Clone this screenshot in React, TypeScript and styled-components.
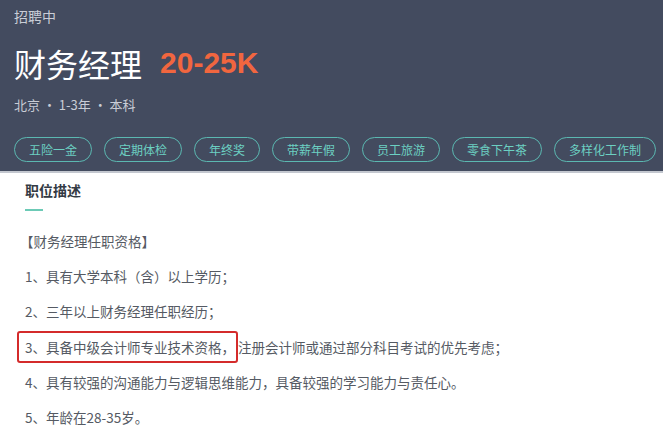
import styled, { createGlobalStyle } from 'styled-components'

const GlobalStyle = createGlobalStyle`
  body {
    margin: 0;
    background: #ffffff;
    font-family: "Noto Sans CJK SC", "Noto Sans", sans-serif;
  }
`

const Page = styled.div`
  width: 663px;
  height: 436px;
  overflow: hidden;
  background: #ffffff;
`

const Header = styled.header`
  background: #434b5f;
  padding: 6px 14px 9px;
  border-bottom: 2px solid #c3c7cf;
`

const Status = styled.div`
  font-size: 14px;
  line-height: 20px;
  color: #c9cdd6;
`

const TitleRow = styled.div`
  display: flex;
  align-items: center;
  margin-top: 17px;
  height: 40px;
`

const Title = styled.h1`
  margin: 0;
  font-size: 32px;
  line-height: 40px;
  font-weight: 400;
  color: #ffffff;
`

const Salary = styled.span`
  margin-left: 18px;
  font-family: "Liberation Sans", Arial, sans-serif;
  font-weight: 700;
  font-size: 30px;
  color: #f1663f;
`

const Meta = styled.div`
  margin-top: 12px;
  font-size: 13px;
  line-height: 20px;
  color: #c9cdd6;
`

const TagList = styled.div`
  display: flex;
  gap: 12px;
  margin-top: 22px;
`

const Tag = styled.span`
  flex-shrink: 0;
  height: 25px;
  box-sizing: border-box;
  padding: 0 14px;
  border: 1.5px solid #5bb8b1;
  border-radius: 13px;
  display: flex;
  align-items: center;
  font-size: 12px;
  color: #6cd0c2;
  white-space: nowrap;
`

const Body = styled.section`
  padding: 7px 25px 0;
`

const SectionTitle = styled.h2`
  margin: 0;
  font-size: 14px;
  line-height: 20px;
  font-weight: 700;
  color: #333a44;
`

const Underline = styled.div`
  width: 18px;
  height: 2px;
  margin-top: 9px;
  background: #6ccab6;
`

const List = styled.div`
  margin-top: 13px;
  margin-left: -5px;
`

const Line = styled.p<{ $indent?: boolean }>`
  margin: 0;
  padding-left: ${p => (p.$indent ? '5px' : '0')};
  font-size: 13.5px;
  line-height: 35.2px;
  color: #555a63;
  white-space: nowrap;
`

const Marked = styled.span`
  border: 2px solid #d42b2b;
  border-radius: 3px;
  padding: 4px 1px 4px 6px;
  margin-left: -8px;
`

const perks = ['五险一金', '定期体检', '年终奖', '带薪年假', '员工旅游', '零食下午茶', '多样化工作制']

export default function App() {
  return (
    <Page>
      <GlobalStyle />
      <Header>
        <Status>招聘中</Status>
        <TitleRow>
          <Title>财务经理</Title>
          <Salary>20-25K</Salary>
        </TitleRow>
        <Meta>北京 · 1-3年 · 本科</Meta>
        <TagList>
          {perks.map(p => (
            <Tag key={p}>{p}</Tag>
          ))}
        </TagList>
      </Header>
      <Body>
        <SectionTitle>职位描述</SectionTitle>
        <Underline />
        <List>
          <Line>【财务经理任职资格】</Line>
          <Line $indent>1、具有大学本科（含）以上学历；</Line>
          <Line $indent>2、三年以上财务经理任职经历；</Line>
          <Line $indent>
            <Marked>3、具备中级会计师专业技术资格，</Marked>注册会计师或通过部分科目考试的优先考虑；
          </Line>
          <Line $indent>4、具有较强的沟通能力与逻辑思维能力，具备较强的学习能力与责任心。</Line>
          <Line $indent>5、年龄在28-35岁。</Line>
        </List>
      </Body>
    </Page>
  )
}
